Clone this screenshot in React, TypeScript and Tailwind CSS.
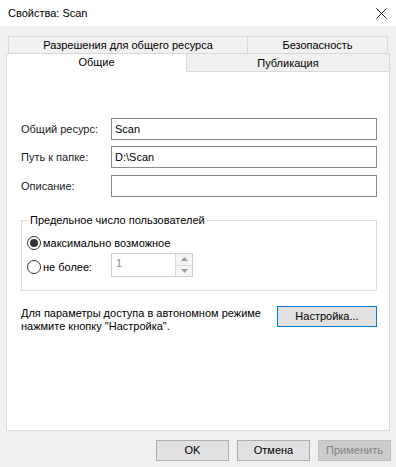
import React from "react";

const font = { fontFamily: '"Liberation Sans", "Noto Sans", sans-serif' };

function Radio({ checked, label }: { checked?: boolean; label: string }) {
  return (
    <div className="flex items-center h-[16px]">
      <span className="flex h-[14px] w-[14px] items-center justify-center rounded-full border border-[#333333] bg-white">
        {checked && <span className="h-[8px] w-[8px] rounded-full bg-[#333333]" />}
      </span>
      <span className="ml-[2px] text-[11px] text-black">{label}</span>
    </div>
  );
}

function Field({ label, value }: { label: string; value?: string }) {
  return (
    <div className="flex items-center h-[22px]">
      <span className="w-[90px] text-[11px] text-[#1b1b1b]">{label}</span>
      <div className="flex h-[22px] w-[266px] items-center border border-[#8a8a8a] bg-white px-[3px] text-[11px] text-black">
        {value}
      </div>
    </div>
  );
}

function Button({ children, disabled, focused }: { children: React.ReactNode; disabled?: boolean; focused?: boolean }) {
  return (
    <div
      className={
        disabled
          ? "flex h-[21px] w-[73px] items-center justify-center border border-[#bfbfbf] bg-[#cccccc] text-[11px] text-[#838383]"
          : focused
            ? "flex h-[21px] w-[100px] items-center justify-center border border-[#0078d7] bg-[#e1e1e1] text-[11px] text-black"
            : "flex h-[21px] w-[73px] items-center justify-center border border-[#adadad] bg-[#e1e1e1] text-[11px] text-black"
      }
    >
      {children}
    </div>
  );
}

export default function App() {
  return (
    <div className="w-[396px] h-[467px] bg-[#f0f0f0] overflow-hidden" style={font}>
      {/* Title bar */}
      <div className="flex h-[26px] items-center justify-between bg-white pl-[8px] pr-[8px]">
        <span className="text-[11px] text-black">Свойства: Scan</span>
        <svg width="11" height="11" viewBox="0 0 11 11" className="mr-[1px]">
          <path d="M0.5 0.5 L10.5 10.5 M10.5 0.5 L0.5 10.5" stroke="#222" strokeWidth="1" />
        </svg>
      </div>

      {/* Tabs */}
      <div className="mt-[10px] ml-[6px] w-[384px]">
        <div className="flex ml-[2px] h-[17px]">
          <div className="flex w-[240px] items-center justify-center border border-b-0 border-[#d9d9d9] text-[11px] text-black">
            Разрешения для общего ресурса
          </div>
          <div className="flex w-[140px] items-center justify-center border border-b-0 border-l-0 border-[#d9d9d9] text-[11px] text-black">
            Безопасность
          </div>
        </div>
        <div className="flex h-[18px]">
          <div className="relative z-10 flex w-[181px] h-[19px] items-start justify-center border border-b-0 border-[#d9d9d9] bg-white text-[11px] leading-[16px] text-black">
            Общие
          </div>
          <div className="flex w-[203px] items-center justify-center border border-l-0 border-b-0 border-[#d9d9d9] pt-[2px] text-[11px] text-black">
            Публикация
          </div>
        </div>

        {/* Panel */}
        <div className="h-[360px] border border-[#d9d9d9] bg-white pl-[14px] pt-[46px]">
          <div className="flex flex-col">
            <Field label="Общий ресурс:" value="Scan" />
            <div className="mt-[6px]">
              <Field label="Путь к папке:" value="D:\Scan" />
            </div>
            <div className="mt-[7px]">
              <Field label="Описание:" />
            </div>
          </div>

          {/* Group box */}
          <div className="relative mt-[23px] h-[71px] w-[356px] border border-[#dcdcdc]">
            <span className="absolute left-[6px] top-[-9px] bg-white px-[2px] text-[11px] leading-[16px] text-black">
              Предельное число пользователей
            </span>
            <div className="pl-[5px] pt-[14px]">
              <Radio checked label="максимально возможное" />
              <div className="mt-[2px] flex items-start">
                <div className="mt-[6px] w-[84px]">
                  <Radio label="не более:" />
                </div>
                <div className="flex h-[24px] w-[82px] items-stretch border border-[#cccccc] bg-white">
                  <span className="flex-1 pl-[4px] text-[11px] leading-[18px] text-[#8a8a8a]">1</span>
                  <div className="flex w-[17px] flex-col border-l border-[#dadada]">
                    <div className="flex flex-1 items-center justify-center border-b border-[#dadada] bg-[#f4f4f4]">
                      <svg width="7" height="4" viewBox="0 0 7 4"><path d="M0 4 L3.5 0 L7 4 Z" fill="#9a9a9a" /></svg>
                    </div>
                    <div className="flex flex-1 items-center justify-center bg-[#f4f4f4]">
                      <svg width="7" height="4" viewBox="0 0 7 4"><path d="M0 0 L3.5 4 L7 0 Z" fill="#9a9a9a" /></svg>
                    </div>
                  </div>
                </div>
              </div>
            </div>
          </div>

          {/* Offline */}
          <div className="mt-[15px] flex w-[356px] items-start justify-between">
            <p className="whitespace-nowrap text-[11px] leading-[13px] text-black pt-[1px]">
              Для параметры доступа в автономном режиме
              <br />
              нажмите кнопку "Настройка".
            </p>
            <Button focused>Настройка...</Button>
          </div>
        </div>
      </div>

      {/* Bottom buttons */}
      <div className="mt-[9px] flex justify-end gap-[8px] pr-[5px]">
        <Button>OK</Button>
        <Button>Отмена</Button>
        <Button disabled>Применить</Button>
      </div>
    </div>
  );
}
